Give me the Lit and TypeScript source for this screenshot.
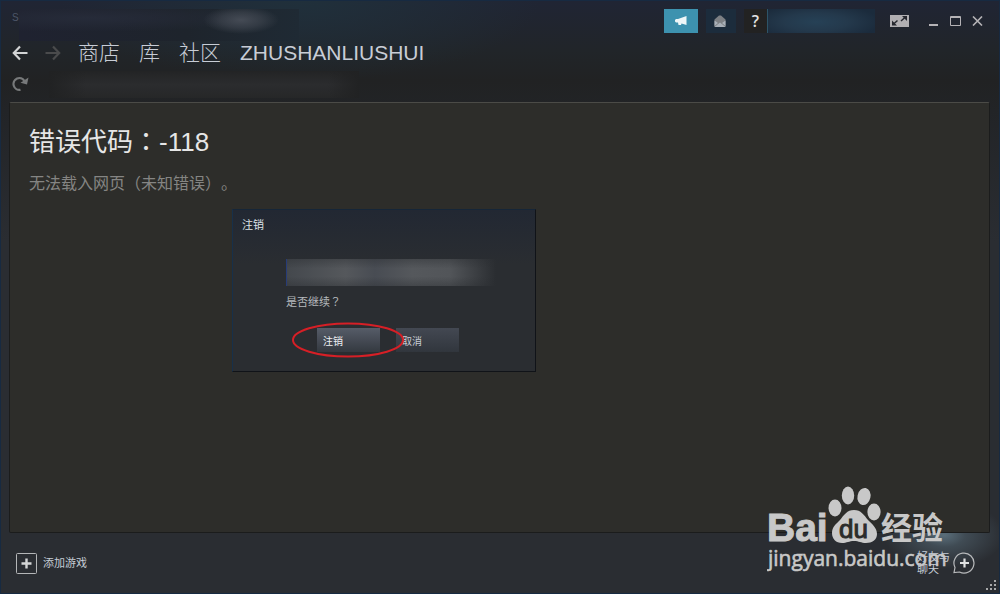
import { LitElement, html, css } from "lit";
import { customElement } from "lit/decorators.js";

@customElement("app-root")
export class AppRoot extends LitElement {
  static styles = css`
    :host {
      display: block;
      font-family: "Liberation Sans", "Noto Sans CJK SC", sans-serif;
      text-spacing-trim: space-all;
    }
    * { box-sizing: border-box; }
    button {
      appearance: none;
      margin: 0;
      padding: 0;
      border: 0;
      border-radius: 0;
      background: none;
      color: inherit;
      font: inherit;
      display: flex;
      align-items: center;
      justify-content: center;
    }
    svg { display: block; flex: none; }
    .window {
      position: relative;
      display: flex;
      flex-direction: column;
      min-height: 100vh;
      overflow: hidden;
      border: 1px solid #172a41;
      color: #c6cdd6;
      background:
        radial-gradient(ellipse 60px 34px at 94.5% calc(100% - 58px), #5a6e7a 0, #53667288 35%, transparent 100%),
        radial-gradient(ellipse 240px 80px at 30% 0, #20303b 0, transparent 100%),
        linear-gradient(#202534 0, #212529 50px, #212223 80px, #222427 110px, #2a2d32 240px, #2a2d32 100%);
    }
    .titlebar {
      display: flex;
      align-items: flex-start;
      height: 39px;
      padding: 8px 16px 0 11px;
    }
    .menu { display: flex; flex: 1; }
    .menu-initial { font-size: 10px; line-height: 18px; color: #4d5668; width: 7px; }
    .menu-blur {
      width: 280px;
      height: 32px;
      background:
        radial-gradient(ellipse 38px 14px at 222px 11px, #454b55 0, #454b5588 55%, transparent 100%),
        radial-gradient(ellipse 170px 14px at 70px 9px, #262b39 0, transparent 100%),
        linear-gradient(90deg, #1f2230, #1e242c 60%, #1f2a34);
    }
    .tools { display: flex; gap: 8px; }
    .news { width: 34px; height: 24px; background: #3d92af; }
    .mail { width: 30px; height: 24px; background: #1c2c3c; }
    .mail svg { margin-right: 3px; }
    .account { display: flex; width: 131px; height: 24px; background: #1b2b3c; }
    .help { width: 24px; height: 24px; background: #222; color: #e2e2e2; border-right: 1px solid #2d5468; font: 600 16px/24px "Open Sans", sans-serif; }
    .account-blur { flex: 1; background: radial-gradient(ellipse 64px 18px at 48px 13px, #264156 0, #24394c 50%, transparent 100%); }
    .frame { display: flex; align-items: center; height: 24px; margin-left: 15px; color: #b5b3b6; }
    .frame .big { margin-right: 20px; }
    .frame .min { margin-right: 12px; }
    .frame .max { margin-right: 11px; }
    .nav { display: flex; align-items: center; height: 26px; padding-left: 11px; }
    .back { margin-right: 17px; }
    .forward { margin-right: 17px; }
    .links { display: flex; gap: 19px; font-size: 21px; line-height: 26px; font-weight: 300; }
    .links a { color: #c8cdd6; text-decoration: none; }
    .address { display: flex; align-items: center; height: 36px; padding-left: 11px; }
    .address-blur { width: 310px; height: 27px; margin-left: 20px; background: linear-gradient(90deg, #212223 0, transparent 12%, transparent 90%, #212223 100%), linear-gradient(#232425, #2b2c2e 50%, #262728); }
    .page {
      flex: 1;
      margin: 0 9px 0 8px;
      padding: 19px;
      border: 1px solid #1b1c1c;
      border-top-color: #4b4b47;
      border-radius: 2px;
      background: #2d2d2a;
    }
    h1 { margin: 0 0 16px; font-size: 26px; line-height: 36px; font-weight: 400; color: #e6e6e6; }
    .wide { font-family: "Noto Sans CJK TC", sans-serif; }
    .page p { margin: 0; font-size: 16px; line-height: 16px; color: #858583; }
    .footer { display: flex; align-items: center; justify-content: space-between; height: 60px; padding: 0 24px 0 15px; font-size: 11px; line-height: 12px; }
    .add { gap: 6px; }
    .chat { text-align: left; gap: 3px; }
    .chat-label { width: 33px; }
    .grip { position: absolute; right: 2px; bottom: 2px; }
    .dialog {
      position: absolute;
      left: 231px;
      top: 208px;
      width: 304px;
      padding: 8px 9px 19px;
      border: 1px solid #101318;
      border-top-color: #162638;
      border-left-color: #17304a;
      background: linear-gradient(#222833 0, #2a2d31 54px);
    }
    .dialog h2 { margin: 0; font-size: 11px; line-height: 15px; font-weight: 400; color: #dfe3e8; }
    .dialog-body { padding: 26px 0 0 44px; font-size: 11px; }
    .name-blur {
      width: 210px;
      height: 27px;
      border-left: 1px solid #273c78;
      background:
        linear-gradient(#2a2d3166, transparent 35%, transparent 65%, #2a2d3166),
        linear-gradient(90deg, #44484d 0, #55585c 28%, #484c53 42%, #55585c 60%, #525559 78%, transparent 100%);
    }
    .dialog p { margin: 8px 0 19px; line-height: 14px; color: #b4b8bc; }
    .actions { display: flex; gap: 16px; padding-left: 31px; }
    .actions button { justify-content: flex-start; width: 63px; height: 24px; padding-left: 6px; font-size: 10px; color: #c9ced5; background: linear-gradient(#434852, #31363d); }
    .actions .primary { color: #eef0f4; background: linear-gradient(#565c68, #343940); }
    .mark { position: absolute; left: 59px; top: 112px; }
    .watermark { position: absolute; right: 48px; bottom: 15px; }
  `;

  render() {
    return html`
      <div class="window">
        <header class="titlebar">
          <div class="menu"><span class="menu-initial">S</span><span class="menu-blur"></span></div>
          <div class="tools">
            <button class="news" aria-label="新闻">
              <svg width="12" height="10" viewBox="0 0 12 10"><path d="M11.5 0v9L6.5 7.4 6 9H3.5L3 6.6H1L0 5.5V4l1-1h2z" fill="#eef6f8"/></svg>
            </button>
            <button class="mail" aria-label="收件箱">
              <svg width="12" height="12" viewBox="0 0 12 12"><path d="M.5 4.5 5 .5h2l4.5 4V12H.5z" fill="#7d8084"/><path d="M.5 5.5 4 8 .5 11zM11.5 5.5 8 8l3.500 3zM.5 12 6 7.500 11.500 12z" fill="#a9b0b8"/></svg>
            </button>
            <div class="account"><button class="help" aria-label="帮助">?</button><div class="account-blur"></div></div>
          </div>
          <div class="frame">
            <button class="big" aria-label="大屏幕模式">
              <svg width="19" height="12" viewBox="0 0 19 12"><path d="M0 0h19v12H0z" fill="#b1afb2"/><path d="m3 9.500 4.500-4M11 6l5-4.500" stroke="#25272e" stroke-width="1.500"/><path d="M2 5.500V10.500H7zM17 6V1H12z" fill="#25272e"/></svg>
            </button>
            <button class="min" aria-label="最小化"><svg width="9" height="10" viewBox="0 0 9 10"><path d="M0 9h9" stroke="currentColor" stroke-width="2"/></svg></button>
            <button class="max" aria-label="最大化"><svg width="11" height="10" viewBox="0 0 11 10" fill="none" stroke="currentColor"><path d="M.5.5h10v9H.5zM0 1.500h11"/></svg></button>
            <button class="close" aria-label="关闭"><svg width="11" height="10" viewBox="0 0 11 10"><path d="m1 .5 9 9m0-9-9 9" stroke="currentColor" stroke-width="1.600"/></svg></button>
          </div>
        </header>
        <nav class="nav">
          <button class="back" aria-label="后退"><svg width="16" height="16" viewBox="0 0 16 16" fill="none" stroke="#d2d4d5" stroke-width="2.200"><path d="M15.500 8H2M8 1.500 1.800 8 8 14.500"/></svg></button>
          <button class="forward" aria-label="前进"><svg width="16" height="16" viewBox="0 0 16 16" fill="none" stroke="#4a4b4c" stroke-width="2.200"><path d="M.5 8h13.500M8 1.500 14.200 8 8 14.500"/></svg></button>
          <div class="links"><a href="#store">商店</a><a href="#library">库</a><a href="#community">社区</a><a href="#profile">ZHUSHANLIUSHUI</a></div>
        </nav>
        <div class="address">
          <button aria-label="重新载入"><svg width="17" height="16" viewBox="0 0 17 16"><path d="M8.500 13.800A5.900 5.900 0 1 1 12.500 5" fill="none" stroke="#77797a" stroke-width="2.200"/><path d="M16.500 1.500 15 8.500 8.500 6.800z" fill="#77797a"/></svg></button>
          <div class="address-blur"></div>
        </div>
        <main class="page">
          <h1>错误代码<span class="wide">：</span>-118</h1>
          <p>无法载入网页（未知错误）。</p>
        </main>
        <footer class="footer">
          <button class="add"><svg width="21" height="21" viewBox="0 0 21 21"><rect x=".5" y=".5" width="20" height="20" rx="1" fill="none" stroke="#b4b6b8"/><path d="M10.500 5.500v10M5.500 10.500h10" stroke="#d4d5d6" stroke-width="2.400"/></svg><span>添加游戏</span></button>
          <button class="chat"><span class="chat-label">好友与聊天</span><svg width="22" height="22" viewBox="0 0 22 22"><path d="M1 20.500 2 15.500A10 10 0 1 1 6.500 20z" fill="none" stroke="#b8babc" stroke-width="1.200"/><path d="M11.500 6.500v9M7 11h9" stroke="#e0e1e2" stroke-width="2.200"/></svg></button>
        </footer>
        <svg class="grip" width="11" height="11" viewBox="0 0 11 11" fill="#a8a9aa"><path d="M8 0h2v2H8zM4 4h2v2H4zM8 4h2v2H8zM0 8h2v2H0zM4 8h2v2H4zM8 8h2v2H8z"/></svg>
        <section class="dialog" role="dialog" aria-labelledby="dialog-title">
          <h2 id="dialog-title">注销</h2>
          <div class="dialog-body">
            <div class="name-blur"></div>
            <p>是否继续<span class="wide">？</span></p>
            <div class="actions"><button class="primary">注销</button><button>取消</button></div>
          </div>
          <svg class="mark" width="112" height="36" viewBox="0 0 112 36"><ellipse cx="56" cy="18" rx="55" ry="16.500" fill="none" stroke="#d61f26" stroke-width="2"/></svg>
        </section>
        <svg class="watermark" width="184" height="92" viewBox="0 0 184 92" fill="#c8c8c8">
          <text x="0" y="55" font-family="Liberation Sans, sans-serif" font-weight="700" font-size="39" stroke="#c8c8c8">Bai</text>
          <ellipse cx="68" cy="22" rx="6.500" ry="8.500"/>
          <ellipse cx="81" cy="9.500" rx="6.200" ry="9"/>
          <ellipse cx="97" cy="10.500" rx="6.500" ry="8.600" transform="rotate(12 97 10.500)"/>
          <ellipse cx="107" cy="26" rx="6.600" ry="8.500"/>
          <path d="M87 24c7 0 10 5 14 10 4 4 9 8 9 14 0 6-5 9-11 9-5 0-7-2-12-2s-7 2-12 2c-6 0-10-4-10-10 0-6 4-9 8-13 4-5 7-10 14-10z"/>
          <text x="72" y="52" font-family="Liberation Sans, sans-serif" font-size="26" fill="#2b2c2b" stroke="#2b2c2b">du</text>
          <text x="114" y="53" font-family="Noto Sans CJK SC, sans-serif" font-weight="700" font-size="31">经验</text>
          <text x="1" y="80" font-family="Open Sans, sans-serif" font-size="21" stroke="#c8c8c8" stroke-width=".6">jingyan.baidu.com</text>
        </svg>
      </div>
    `;
  }
}
